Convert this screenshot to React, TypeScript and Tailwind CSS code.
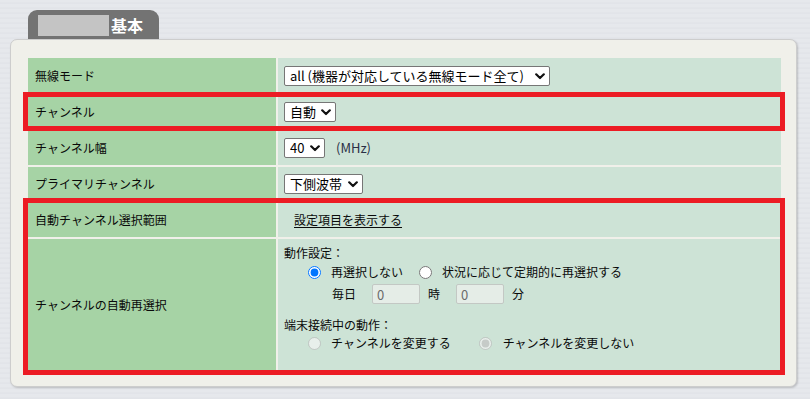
import React from 'react';

// chevron used by the fake-native selects
const Chevron = () => (
  <svg width="10" height="7" viewBox="0 0 10 7" className="pointer-events-none absolute right-[5px] top-[7px]">
    <path d="M1.2 1.3 L5 5 L8.8 1.3" fill="none" stroke="#111" strokeWidth="2.2" strokeLinecap="round" strokeLinejoin="round" />
  </svg>
);

const Select = ({ value, w }: { value: string; w: string }) => (
  <span className={`relative inline-flex h-[20px] ${w}`}>
    <select
      defaultValue={value}
      className="appearance-none w-full h-full bg-white border border-[#767676] rounded-[2px] pl-[5px] pr-[18px] text-[13px] leading-[18px] text-[#000] outline-none"
    >
      <option value={value}>{value}</option>
    </select>
    <Chevron />
  </span>
);

const Label = ({ children }: { children: React.ReactNode }) => (
  <div className="w-[248px] shrink-0 bg-[#a6d3a5] pl-[7px] flex items-center">{children}</div>
);

export default function App() {
  return (
    <div className="w-[810px] h-[399px] overflow-hidden bg-[repeating-linear-gradient(180deg,#e6e8ec_0px,#e6e8ec_2px,#e0e2e7_3px,#e8eaee_5px)] font-['Noto_Sans_CJK_JP','Noto_Sans',sans-serif] text-[12px] text-[#0a0a0a]">
      {/* tab */}
      <div className="ml-[28px] mt-[10px] w-[131px] h-[29px] bg-[#737373] rounded-t-[9px] flex items-end pl-[10px] pb-[3px]">
        <div className="w-[71px] h-[21px] bg-[#c4c4c4]" />
        <span className="ml-[2px] mb-[1px] text-[16px] leading-[20px] font-bold text-white">基本</span>
      </div>

      {/* panel */}
      <div className="ml-[10px] w-[787px] h-[348px] bg-[#f0f0ea] border border-[#cdcdcd] rounded-[7px] shadow-[1px_1px_2px_rgba(0,0,0,0.18)] pt-[18px] pl-[17px] pr-[15px]">
        <div className="flex flex-col gap-[2px]">
          <div className="flex gap-[2px] h-[35px]">
            <Label>無線モード</Label>
            <div className="flex-1 bg-[#cde3d6] pl-[6px] flex items-center">
              <Select value="all (機器が対応している無線モード全て)" w="w-[266px]" />
            </div>
          </div>

          <div className="relative flex gap-[2px] h-[34px]">
            <Label>チャンネル</Label>
            <div className="flex-1 bg-[#cde3d6] pl-[6px] flex items-center">
              <Select value="自動" w="w-[52px]" />
            </div>
            <div className="absolute -top-[3px] -bottom-[2px] -left-[5px] -right-[4px] border-[5px] border-[#ec1c24]" />
          </div>

          <div className="flex gap-[2px] h-[34px]">
            <Label>チャンネル幅</Label>
            <div className="flex-1 bg-[#cde3d6] pl-[6px] flex items-center">
              <Select value="40" w="w-[41px]" />
              <span className="ml-[11px] text-[13px] text-[#2a2f45]">(MHz)</span>
            </div>
          </div>

          <div className="flex gap-[2px] h-[34px]">
            <Label>プライマリチャンネル</Label>
            <div className="flex-1 bg-[#cde3d6] pl-[6px] flex items-center">
              <Select value="下側波帯" w="w-[79px]" />
            </div>
          </div>

          <div className="relative flex flex-col gap-[2px]">
            <div className="flex gap-[2px] h-[34px]">
              <Label>自動チャンネル選択範囲</Label>
              <div className="flex-1 bg-[#cde3d6] pl-[16px] flex items-center">
                <a href="#" className="underline underline-offset-2 text-[#0a0a0a]">設定項目を表示する</a>
              </div>
            </div>

            <div className="flex gap-[2px] h-[132px]">
              <Label>チャンネルの自動再選択</Label>
              <div className="flex-1 bg-[#cde3d6] pl-[6px] pt-[5px] flex flex-col">
                <div className="h-[18px] leading-[18px]">動作設定：</div>
                <div className="h-[20px] flex items-center pl-[24px]">
                  <input type="radio" name="resel" defaultChecked className="w-[13px] h-[13px] m-0" />
                  <span className="ml-[10px]">再選択しない</span>
                  <input type="radio" name="resel" className="ml-[16px] w-[13px] h-[13px] m-0" />
                  <span className="ml-[10px]">状況に応じて定期的に再選択する</span>
                </div>
                <div className="mt-[2px] h-[20px] flex items-center pl-[48px]">
                  <span>毎日</span>
                  <input type="text" disabled defaultValue="0" className="ml-[16px] w-[48px] h-[20px] bg-[#e5ede7] border border-[#c3c8c4] rounded-[2px] pl-[4px] text-[13px] text-[#6b6b6b]" />
                  <span className="ml-[8px]">時</span>
                  <input type="text" disabled defaultValue="0" className="ml-[16px] w-[48px] h-[20px] bg-[#e5ede7] border border-[#c3c8c4] rounded-[2px] pl-[4px] text-[13px] text-[#6b6b6b]" />
                  <span className="ml-[8px]">分</span>
                </div>
                <div className="mt-[12px] h-[18px] leading-[18px]">端末接続中の動作：</div>
                <div className="h-[18px] flex items-center pl-[24px]">
                  <input type="radio" name="conn" disabled className="w-[13px] h-[13px] m-0" />
                  <span className="ml-[10px]">チャンネルを変更する</span>
                  <input type="radio" name="conn" disabled defaultChecked className="ml-[28px] w-[13px] h-[13px] m-0" />
                  <span className="ml-[11px]">チャンネルを変更しない</span>
                </div>
              </div>
            </div>
            <div className="absolute -top-[5px] -bottom-[4px] -left-[5px] -right-[4px] border-[5px] border-[#ec1c24]" />
          </div>
        </div>
      </div>
    </div>
  );
}
